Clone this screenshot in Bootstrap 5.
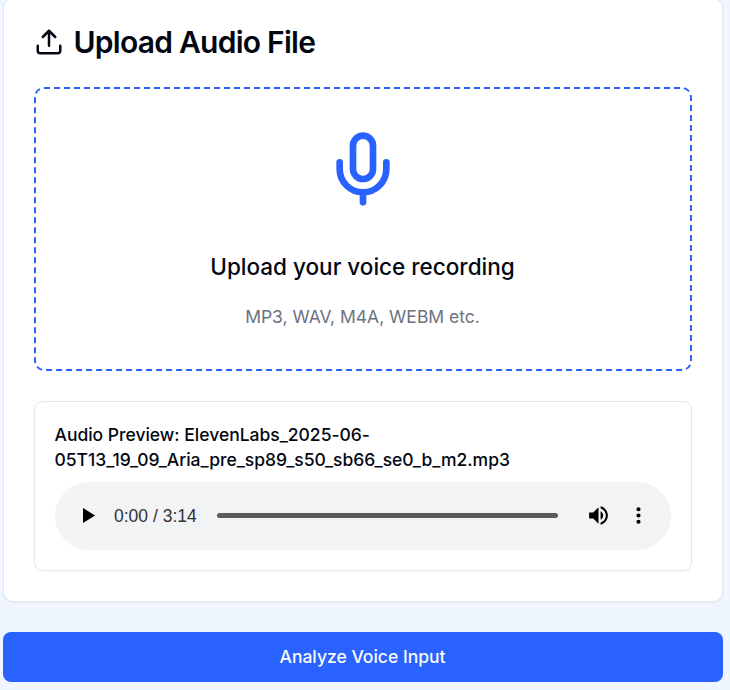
<!DOCTYPE html>
<html lang="en">
<head>
<meta charset="utf-8">
<meta name="viewport" content="width=device-width, initial-scale=1">
<title>Upload Audio File</title>
<link href="https://cdn.jsdelivr.net/npm/bootstrap@5.3.0/dist/css/bootstrap.min.css" rel="stylesheet">
<style>
body{background:#eff6ff;color:#030712;font-family:Inter,sans-serif;font-size:17.5px;line-height:25px;overflow:hidden}
.page-col{width:720px;margin:-2px 0 0 3px;gap:30px}
.panel{border:1px solid #e5e7eb;border-radius:10px;padding:28px 30px 30px;box-shadow:0 1px 2px rgba(0,0,0,.05);height:604px}
.panel-title{font-size:30px;line-height:30px;font-weight:600;letter-spacing:-.75px;gap:9.5px;margin-bottom:30px}
.drop{border:2px dashed #2962ff;border-radius:10px;height:284px;padding-top:40px;margin-bottom:30px}
.drop-title{font-size:22.5px;line-height:35px;margin-top:40px;padding-right:1px}
.drop-hint{color:#6b7280;margin-top:20px;padding-right:1px}
.preview{border:1px solid #e5e7eb;border-radius:8px;padding:20px;height:170px;box-shadow:0 1px 2px rgba(0,0,0,.04)}
.preview-name{margin-left:-.5px;letter-spacing:-.01px}
.player{height:67.5px;background:#f1f3f4;margin-top:10px;color:#000;padding:0 20px}
.player-time{font-family:"Liberation Sans",Arial,sans-serif;color:#303134;width:103px;padding-top:2px}
.player-track{height:5px;background:#595959;width:341px}
.player-menu{margin-left:15px}
.btn-analyze,.btn-analyze:hover{background:#2962ff;color:#f8fafc;font-size:17.5px;line-height:25px;font-weight:500;border:0;border-radius:8px;height:50px;padding:5px 13px 7px 12px}
</style>
<script src="https://cdn.jsdelivr.net/npm/bootstrap@5.3.0/dist/js/bootstrap.bundle.min.js"></script>
</head>
<body>
<main class="page-col d-flex flex-column">
  <section class="panel bg-white">
    <h1 class="panel-title d-flex align-items-center">
      <svg width="30" height="30" viewBox="0 0 24 24" fill="none" stroke="currentColor" stroke-width="2" stroke-linecap="round" stroke-linejoin="round"><path d="M21 15v4a2 2 0 0 1-2 2H5a2 2 0 0 1-2-2v-4"/><path d="M17 8l-5-5-5 5M12 3v12"/></svg>
      <span>Upload Audio File</span>
    </h1>
    <div class="drop d-flex flex-column align-items-center">
      <svg width="80" height="80" viewBox="0 0 24 24" fill="none" stroke="#2962ff" stroke-width="2" stroke-linecap="round" stroke-linejoin="round"><path d="M12 2a3 3 0 0 0-3 3v7a3 3 0 0 0 6 0V5a3 3 0 0 0-3-3Z"/><path d="M19 10v2a7 7 0 0 1-14 0v-2M12 19v3"/></svg>
      <div class="drop-title fw-medium">Upload your voice recording</div>
      <div class="drop-hint">MP3, WAV, M4A, WEBM etc.</div>
    </div>
    <div class="preview">
      <div class="preview-name fw-medium">Audio Preview: ElevenLabs_2025-06-<br>05T13_19_09_Aria_pre_sp89_s50_sb66_se0_b_m2.mp3</div>
      <div class="player d-flex align-items-center rounded-pill">
        <svg class="me-3" width="23" height="25" viewBox="0 0 23 25"><path d="M8 5v15l12-7.500z"/></svg>
        <span class="player-time">0:00 / 3:14</span>
        <div class="player-track rounded-pill"></div>
        <svg class="ms-auto" width="25" height="25" viewBox="0 0 24 24"><path d="M3 9v6h4l5 5V4L7 9H3zm13.500 3c0-1.770-1.020-3.290-2.500-4.030v8.050c1.480-.73 2.500-2.250 2.500-4.020zM14 3.230v2.060c2.890.86 5 3.540 5 6.710s-2.110 5.850-5 6.710v2.060c4.010-.91 7-4.490 7-8.770s-2.990-7.860-7-8.770z"/></svg>
        <svg class="player-menu" width="25" height="25" viewBox="0 0 24 24"><path d="M12 8a2 2 0 1 0 0-4 2 2 0 0 0 0 4zm0 2a2 2 0 1 0 0 4 2 2 0 0 0 0-4zm0 6a2 2 0 1 0 0 4 2 2 0 0 0 0-4z"/></svg>
      </div>
    </div>
  </section>
  <button type="button" class="btn btn-analyze w-100">Analyze Voice Input</button>
</main>
</body>
</html>
